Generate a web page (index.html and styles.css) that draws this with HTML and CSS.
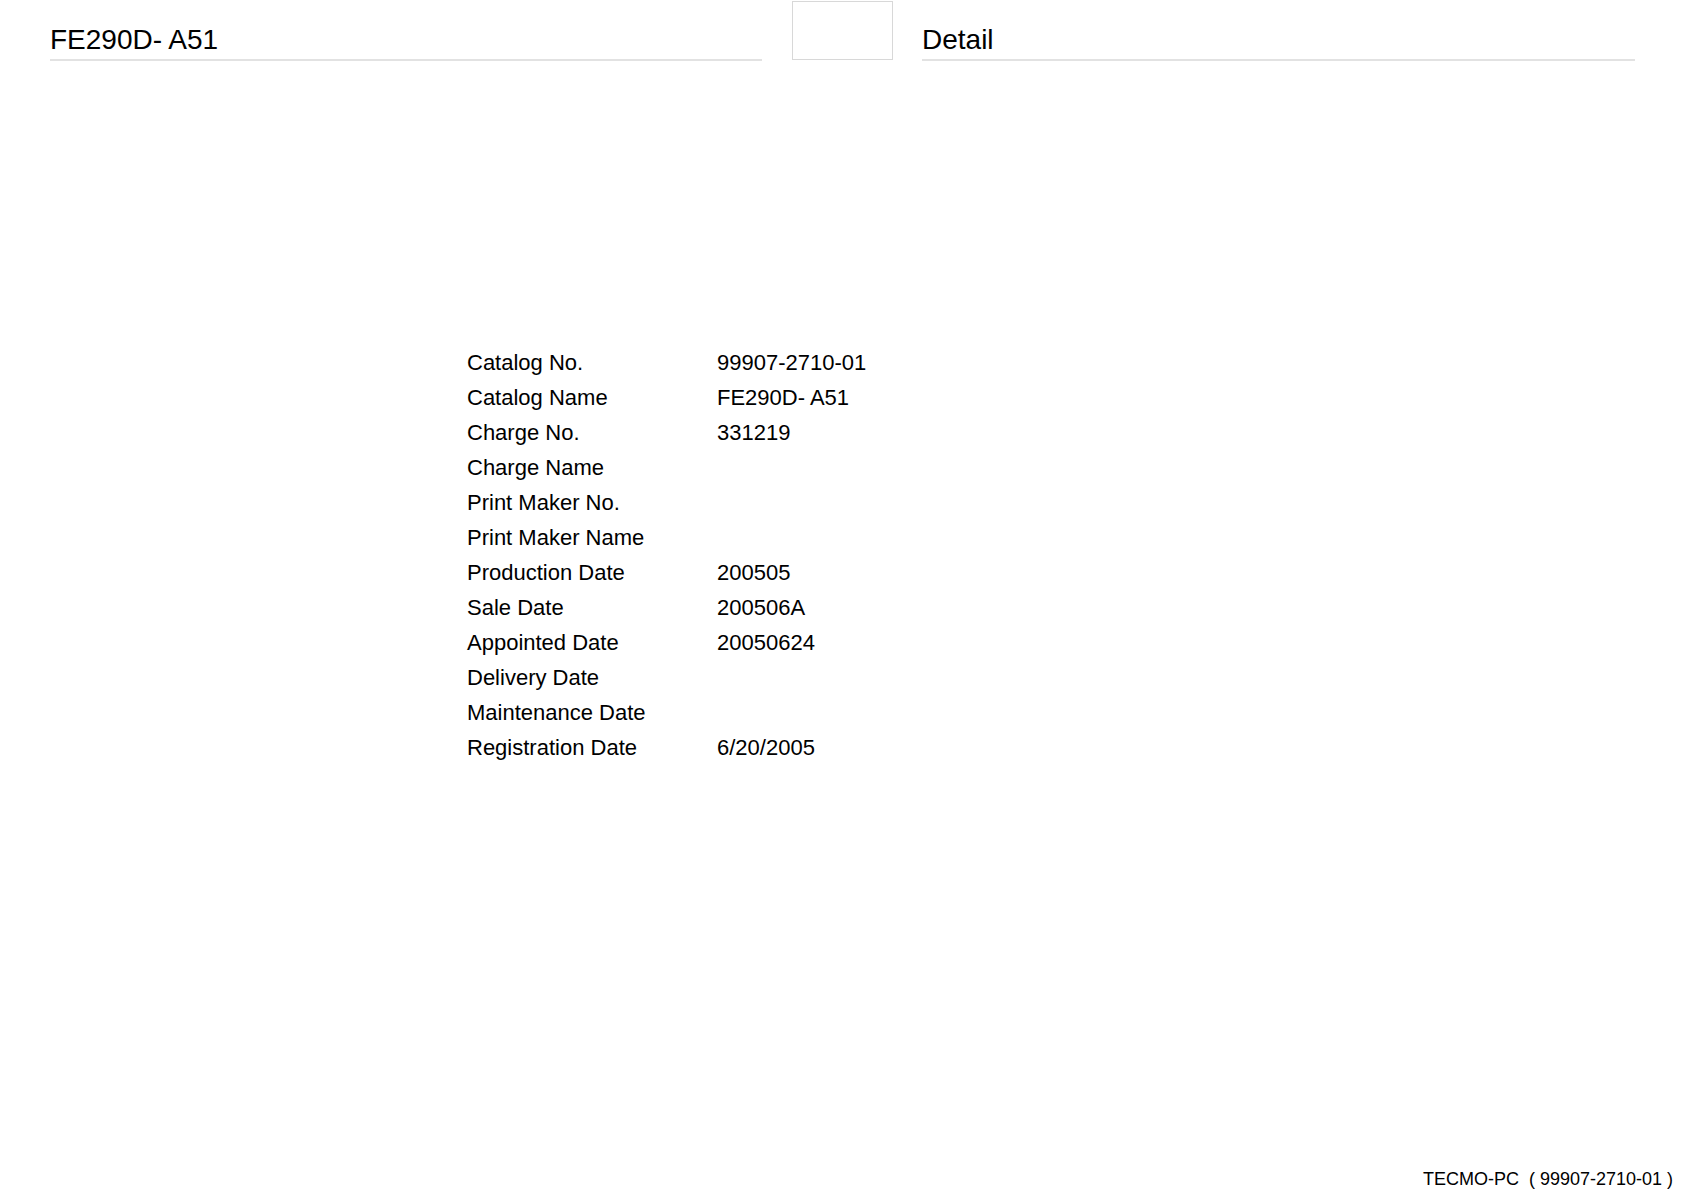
FILE: index.html
```html
<!DOCTYPE html>
<html>
<head>
<meta charset="utf-8">
<link rel="stylesheet" href="styles.css">
</head>
<body>
<div class="page">
  <header class="header">
    <div class="title">FE290D- A51</div>
    <div class="logo-box"></div>
    <div class="title detail">Detail</div>
  </header>
  <main class="info">
    <div class="row"><span class="label">Catalog No.</span><span class="value">99907-2710-01</span></div>
    <div class="row"><span class="label">Catalog Name</span><span class="value">FE290D- A51</span></div>
    <div class="row"><span class="label">Charge No.</span><span class="value">331219</span></div>
    <div class="row"><span class="label">Charge Name</span><span class="value"></span></div>
    <div class="row"><span class="label">Print Maker No.</span><span class="value"></span></div>
    <div class="row"><span class="label">Print Maker Name</span><span class="value"></span></div>
    <div class="row"><span class="label">Production Date</span><span class="value">200505</span></div>
    <div class="row"><span class="label">Sale Date</span><span class="value">200506A</span></div>
    <div class="row"><span class="label">Appointed Date</span><span class="value">20050624</span></div>
    <div class="row"><span class="label">Delivery Date</span><span class="value"></span></div>
    <div class="row"><span class="label">Maintenance Date</span><span class="value"></span></div>
    <div class="row"><span class="label">Registration Date</span><span class="value">6/20/2005</span></div>
  </main>
  <footer class="footer">TECMO-PC  ( 99907-2710-01 )</footer>
</div>
</body>
</html>
```
FILE: styles.css
```css
html, body {
  margin: 0;
  padding: 0;
  background: #ffffff;
}
body {
  font-family: "Liberation Sans", Arial, sans-serif;
  color: #000000;
}
.page {
  width: 1684px;
  height: 1190px;
  display: flex;
  flex-direction: column;
  box-sizing: border-box;
}
.header {
  display: flex;
  align-items: flex-start;
  padding-left: 50px;
}
.title {
  width: 712px;
  padding-top: 25px;
  padding-bottom: 4px;
  font-size: 28px;
  line-height: 30px;
  border-bottom: 2px solid #e2e2e2;
}
.logo-box {
  width: 101px;
  height: 59px;
  margin-top: 1px;
  margin-left: 30px;
  margin-right: 29px;
  box-sizing: border-box;
  border: 1px solid #d8d8d8;
}
.detail {
  width: 713px;
}
.info {
  margin-top: 284px;
  margin-left: 467px;
  display: flex;
  flex-direction: column;
}
.row {
  display: flex;
  height: 35px;
  line-height: 35px;
  font-size: 22px;
}
.label {
  width: 250px;
}
.footer {
  margin-top: auto;
  text-align: right;
  white-space: pre;
  font-size: 18px;
  line-height: 20px;
  padding-right: 11px;
  padding-bottom: 1px;
}
```
